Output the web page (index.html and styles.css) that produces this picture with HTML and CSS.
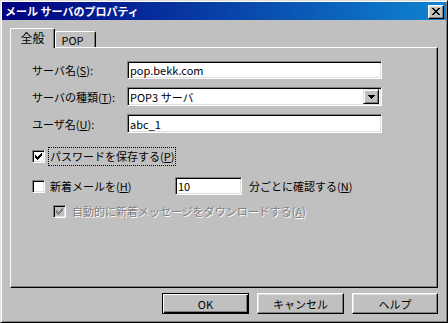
FILE: index.html
```html
<!DOCTYPE html>
<html lang="ja">
<head>
<meta charset="utf-8">
<link rel="stylesheet" href="styles.css">
</head>
<body>
<div class="window">
  <div class="titlebar">
    <span class="title">メール サーバのプロパティ</span>
    <span class="close"><svg width="8" height="7" viewBox="0 0 8 7" shape-rendering="crispEdges"><path d="M0 0h2v1H0zM6 0h2v1H6zM1 1h2v1H1zM5 1h2v1H5zM2 2h4v1H2zM3 3h2v1H3zM2 4h4v1H2zM1 5h2v1H1zM5 5h2v1H5zM0 6h2v1H0zM6 6h2v1H6z" fill="#000"/></svg></span>
  </div>
  <div class="tabs">
    <div class="tab active">全般</div>
    <div class="tab">POP</div>
  </div>
  <div class="panel">
    <div class="form">
      <div class="label">サーバ名(<u>S</u>):</div>
      <div class="field f1">pop.bekk.com</div>
      <div class="label">サーバの種類(<u>T</u>):</div>
      <div class="field combo"><span class="combo-text">POP3 サーバ</span><span class="drop"><svg width="7" height="4" viewBox="0 0 7 4" shape-rendering="crispEdges"><path d="M0 0h7v1H0zM1 1h5v1H1zM2 2h3v1H2zM3 3h1v1H3z" fill="#000"/></svg></span></div>
      <div class="label">ユーザ名(<u>U</u>):</div>
      <div class="field">abc_1</div>
    </div>
    <div class="check-row row-pass">
      <span class="checkbox"><svg width="7" height="7" viewBox="0 0 7 7" shape-rendering="crispEdges"><path d="M6 0h1v1H6zM5 1h2v1H5zM0 2h1v1H0zM4 2h3v1H4zM0 3h2v1H0zM3 3h3v1H3zM0 4h5v1H0zM1 5h3v1H1zM2 6h1v1H2z" fill="#000"/></svg></span>
      <span class="focus">パスワードを保存する(<u>P</u>)</span>
    </div>
    <div class="check-row row-new">
      <span class="checkbox"></span>
      <span class="check-label">新着メールを(<u>H</u>)</span>
      <span class="field mins">10</span>
      <span class="after">分ごとに確認する(<u>N</u>)</span>
    </div>
    <div class="check-row row-auto">
      <span class="checkbox disabled"><svg width="7" height="7" viewBox="0 0 7 7" shape-rendering="crispEdges"><path d="M6 0h1v1H6zM5 1h2v1H5zM0 2h1v1H0zM4 2h3v1H4zM0 3h2v1H0zM3 3h3v1H3zM0 4h5v1H0zM1 5h3v1H1zM2 6h1v1H2z" fill="#808080"/></svg></span>
      <span class="disabled-text">自動的に新着メッセージをダウンロードする(<u>A</u>)</span>
    </div>
  </div>
  <div class="buttons">
    <div class="btn default">OK</div>
    <div class="btn">キャンセル</div>
    <div class="btn">ヘルプ</div>
  </div>
</div>
</body>
</html>
```

FILE: styles.css
```css
* { box-sizing: border-box; }
html, body { margin: 0; padding: 0; background: #c0c0c0; }
body {
  font-family: "Noto Sans CJK JP", "Noto Sans", sans-serif;
  font-size: 11px;
  color: #000;
}
u { text-decoration: underline; text-underline-offset: 1px; }

.window {
  width: 448px;
  height: 323px;
  background: #c0c0c0;
  border: 1px solid;
  border-color: #dfdfdf #000 #000 #dfdfdf;
  box-shadow: inset 1px 1px #fff, inset -1px -1px #808080;
  padding: 1px;
  display: flex;
  flex-direction: column;
}

.titlebar {
  height: 18px;
  background: linear-gradient(to right, #000080, #1084d0);
  display: flex;
  align-items: center;
  justify-content: space-between;
  padding: 0 2px 0 3px;
}
.title {
  color: #fff;
  font-weight: bold;
  line-height: 18px;
  white-space: nowrap;
}
.close {
  width: 16px;
  height: 14px;
  margin-top: 1px;
  background: #c0c0c0;
  border: 1px solid;
  border-color: #fff #000 #000 #fff;
  box-shadow: inset -1px -1px #808080, inset 1px 1px #dfdfdf;
  display: flex;
  align-items: center;
  justify-content: center;
}
.close svg { display: block; margin-left: 0px; }

.tabs {
  display: flex;
  align-items: flex-end;
  height: 19px;
  margin: 8px 0 0 8px;
}
.tab {
  height: 16px;
  background: #c0c0c0;
  border-top: 1px solid #fff;
  border-left: 1px solid #fff;
  border-right: 1px solid #000;
  box-shadow: inset -1px 0 #808080;
  border-radius: 2px 2px 0 0;
  display: flex;
  align-items: center;
  justify-content: center;
  line-height: 14px;
}
.tab.active {
  width: 45px;
  height: 20px;
  margin-bottom: -1px;
  position: relative;
  z-index: 1;
  font-size: 12px;
  padding-bottom: 2px;
}
.tab:not(.active) {
  width: 41px;
  padding-right: 6px;
}

.panel {
  width: 428px;
  height: 241px;
  margin-left: 8px;
  border-top: 1px solid #fff;
  border-left: 1px solid #fff;
  border-right: 1px solid #000;
  border-bottom: 1px solid #000;
  box-shadow: inset -1px -1px #808080;
  padding: 13px 0 0 21px;
  display: flex;
  flex-direction: column;
}

.form {
  display: grid;
  grid-template-columns: 95px 255px;
  grid-template-rows: 18px 19px 19px;
  row-gap: 8px;
  align-items: center;
}
.label { white-space: nowrap; line-height: 14px; }

.field {
  height: 100%;
  background: #fff;
  border: 1px solid;
  border-color: #808080 #fff #fff #808080;
  box-shadow: inset 1px 1px #000, inset -1px -1px #dfdfdf;
  padding: 0 2px 0 2px;
  display: flex;
  align-items: center;
  line-height: 14px;
  white-space: nowrap;
}
.combo { padding-right: 2px; justify-content: space-between; }
.drop {
  width: 16px;
  height: 15px;
  background: #c0c0c0;
  border: 1px solid;
  border-color: #dfdfdf #000 #000 #dfdfdf;
  box-shadow: inset 1px 1px #fff, inset -1px -1px #808080;
  display: flex;
  align-items: center;
  justify-content: center;
}
.drop svg { display: block; }

.check-row {
  display: flex;
  align-items: center;
  white-space: nowrap;
  line-height: 14px;
}
.row-pass { height: 19px; margin-top: 14px; }
.row-new { height: 18px; margin-top: 11px; }
.row-auto { height: 16px; margin-top: 8px; padding-left: 21px; }

.checkbox {
  width: 13px;
  height: 13px;
  flex: none;
  background: #fff;
  border: 1px solid;
  border-color: #808080 #fff #fff #808080;
  box-shadow: inset 1px 1px #000, inset -1px -1px #dfdfdf;
  display: flex;
  align-items: center;
  justify-content: center;
}
.checkbox svg { display: block; }
.checkbox.disabled { background: #c0c0c0; }

.focus {
  margin-left: 4px;
  padding: 1px 1px 2px 1px;
  outline: 1px dotted #000;
  outline-offset: 0;
}
.check-label { margin-left: 5px; width: 125px; }
.mins { width: 67px; height: 18px; }
.after { margin-left: 7px; }
.disabled-text {
  margin-left: 6px;
  color: #808080;
  text-shadow: 1px 1px #fff;
}

.buttons {
  display: flex;
  justify-content: flex-end;
  gap: 8px;
  margin: 5px 8px 0 0;
}
.btn {
  width: 87px;
  height: 21px;
  background: #c0c0c0;
  border: 1px solid;
  border-color: #fff #000 #000 #fff;
  box-shadow: inset -1px -1px #808080, inset 1px 1px #dfdfdf;
  display: flex;
  align-items: center;
  justify-content: center;
  line-height: 14px;
}
.btn:last-child { width: 86px; }
.btn.default {
  border-color: #000;
  box-shadow: inset 1px 1px #fff, inset -1px -1px #000, inset -2px -2px #808080;
}
```
